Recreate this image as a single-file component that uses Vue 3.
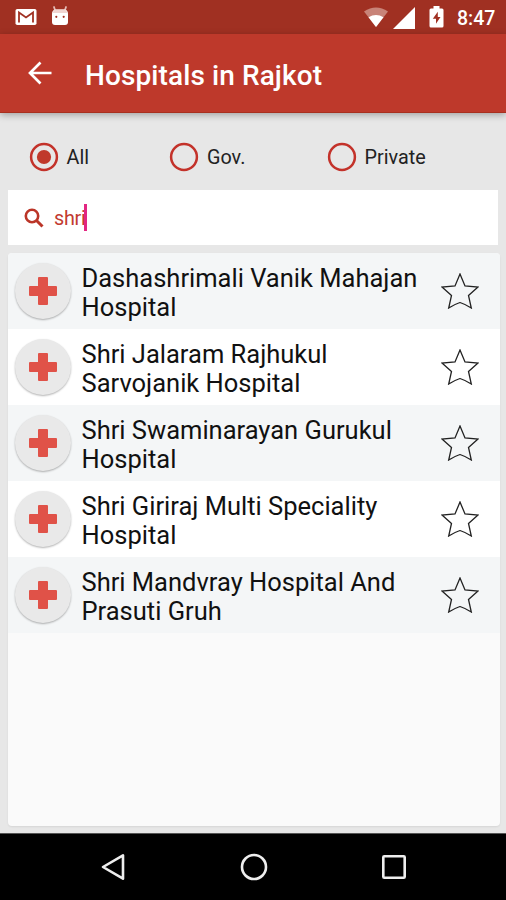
<script setup>
import { ref } from 'vue'

const filters = ['All', 'Gov.', 'Private']
const selected = ref('All')
const query = ref('shri')

const hospitals = [
  ['Dashashrimali Vanik Mahajan', 'Hospital'],
  ['Shri Jalaram Rajhukul', 'Sarvojanik Hospital'],
  ['Shri Swaminarayan Gurukul', 'Hospital'],
  ['Shri Giriraj Multi Speciality', 'Hospital'],
  ['Shri Mandvray Hospital And', 'Prasuti Gruh'],
]
</script>

<template>
  <div class="screen">
    <div class="status">
      <svg class="mail" width="22" height="18" viewBox="0 0 22 18">
        <rect x="0.5" y="1" width="21" height="16" rx="1.8" fill="#fff" />
        <path d="M4 14.500V4.600L11 9.500l7-4.900V14.500" fill="none" stroke="#a03022" stroke-width="1.800" />
      </svg>
      <svg class="droid" width="18" height="20" viewBox="0 0 18 20">
        <path d="M4 4L3 1M14 4l1-3" stroke="#e3b9b3" stroke-width="1.800" stroke-linecap="round" />
        <path d="M1 8Q1 3.500 5 3.500h8q4 0 4 4.500v8q0 3-3 3H4q-3 0-3-3z" fill="#fff" />
        <path d="M2 7q0-3.500 3.500-3.500h7q3.500 0 3.500 3.500z" fill="#f0d4d0" />
        <circle cx="5.300" cy="10.800" r="1.100" fill="#a03022" />
        <circle cx="12.700" cy="10.800" r="1.100" fill="#a03022" />
      </svg>
      <span class="fill"></span>
      <svg class="wifi" width="26" height="21" viewBox="0 0 26 21">
        <path d="M1 4.500Q13-3.500 25 4.500L13 20z" fill="#c88378" />
        <path d="M5.500 10.300Q13 5.500 20.500 10.300L13 20z" fill="#fff" />
      </svg>
      <svg class="signal" width="22" height="22" viewBox="0 0 22 22">
        <path d="M0 22L22 0v22z" fill="#fff" />
      </svg>
      <svg class="battery" width="15" height="22" viewBox="0 0 15 22">
        <path d="M4.500 0h6v2.500H13q1.500 0 1.500 1.500v16q0 1.500-1.500 1.500H2Q.5 21.500.5 20V4Q.5 2.500 2 2.500h2.500z" fill="#fff" />
        <path d="M8.800 5.800L3.800 12.800h3.200v5L11.500 11H8.800z" fill="#a03022" />
      </svg>
      <span class="time">8:47</span>
    </div>

    <header class="appbar">
      <svg width="24" height="24" viewBox="0 0 24 24">
        <path d="M12.500 1.500L2 12l10.500 10.500M2 12h21.500" fill="none" stroke="#fff" stroke-width="2.700" />
      </svg>
      <h1>Hospitals in Rajkot</h1>
    </header>

    <main class="body">
      <div class="filters">
        <button v-for="f in filters" :key="f" class="filter" @click="selected = f">
          <svg width="30" height="30" viewBox="0 0 30 30">
            <circle cx="15" cy="15" r="12.900" fill="none" stroke="#c3322a" stroke-width="2.500" />
            <circle v-if="selected === f" cx="15" cy="15" r="7.100" fill="#c0392b" />
          </svg>
          <span>{{ f }}</span>
        </button>
      </div>

      <div class="search">
        <svg width="20" height="20" viewBox="0 0 20 20">
          <circle cx="8" cy="8" r="6.200" fill="none" stroke="#bb3528" stroke-width="2.600" />
          <path d="M12.500 12.500l6 6" stroke="#bb3528" stroke-width="3" />
        </svg>
        <span class="query">{{ query }}</span>
        <span class="caret"></span>
      </div>

      <div class="list">
        <div v-for="h in hospitals" :key="h[0]" class="row">
          <span class="badge">
            <svg width="28" height="28" viewBox="0 0 28 28">
              <path d="M10 0h8q1 0 1 1v8h8q1 0 1 1v8q0 1-1 1h-8v8q0 1-1 1h-8q-1 0-1-1v-8H1q-1 0-1-1v-8q0-1 1-1h8V1q0-1 1-1z" fill="#e05248" />
            </svg>
          </span>
          <p class="name"><span>{{ h[0] }}</span><br><span>{{ h[1] }}</span></p>
          <svg class="star" width="38" height="36" viewBox="0 0 38 36">
            <path d="M19 1L24 13L37 14L27.500 22.500L30.300 35Q25 31.500 19 29.500Q13 31.500 7.700 35L10.500 22.500L1 14L14 13Z" fill="none" stroke="#222" stroke-width="1.300" />
          </svg>
        </div>
      </div>
    </main>

    <nav class="nav">
      <svg width="26" height="30" viewBox="0 0 26 30">
        <path d="M23 3.300v23.400L3 15z" fill="none" stroke="#eee" stroke-width="2.600" stroke-linejoin="round" />
      </svg>
      <svg width="30" height="30" viewBox="0 0 30 30">
        <circle cx="15" cy="15" r="12" fill="none" stroke="#eee" stroke-width="2.600" />
      </svg>
      <svg width="26" height="26" viewBox="0 0 26 26">
        <rect x="2.300" y="2.300" width="21.400" height="21.400" rx="1" fill="none" stroke="#eee" stroke-width="2.600" />
      </svg>
    </nav>
  </div>
</template>

<style>
body {
  margin: 0;
}
</style>

<style scoped>
.screen {
  width: 506px;
  height: 900px;
  display: flex;
  flex-direction: column;
  overflow: hidden;
  background: #e7e7e7;
  font-family: Roboto, "Liberation Sans", sans-serif;
}
svg {
  display: block;
  flex: none;
}
.status {
  height: 34px;
  flex: none;
  box-sizing: border-box;
  padding: 0 11px 0 15px;
  display: flex;
  align-items: center;
  background: #a03022;
  color: #fff;
}
.droid {
  margin: -2px 0 0 14px;
}
.fill {
  flex: 1;
}
.wifi {
  margin-top: 1px;
}
.signal {
  margin: 2px 0 0 4px;
}
.battery {
  margin-left: 14px;
}
.time {
  width: 38px;
  margin: 3px 0 0 13px;
  font-size: 19.500px;
  font-weight: 500;
  white-space: nowrap;
}
.appbar {
  height: 79px;
  flex: none;
  box-sizing: border-box;
  padding: 0 0 0 28px;
  display: flex;
  align-items: center;
  gap: 33px;
  background: #be392b;
  border-bottom: 1px solid #a8301f;
  box-shadow: 0 2px 7px rgba(0, 0, 0, 0.3);
  color: #fff;
}
h1 {
  margin: 4px 0 0;
  font-size: 28px;
  font-weight: 500;
  letter-spacing: 0.100px;
  white-space: nowrap;
}
.body {
  flex: 1;
  min-height: 0;
  box-sizing: border-box;
  padding: 0 6px 7px 8px;
  display: flex;
  flex-direction: column;
}
.filters {
  height: 77px;
  flex: none;
  box-sizing: border-box;
  padding: 10px 0 0 20.500px;
  display: grid;
  grid-template-columns: 140.500px 157.500px 1fr;
  align-items: center;
}
.filter {
  padding: 0;
  border: 0;
  background: none;
  display: flex;
  align-items: center;
  gap: 8px;
  font: 400 19.800px Roboto, sans-serif;
  color: #222;
}
.filter span {
  margin-top: 1px;
}
.search {
  height: 55px;
  flex: none;
  box-sizing: border-box;
  margin-right: 2px;
  padding-left: 16px;
  display: flex;
  align-items: center;
  background: #fff;
}
.query {
  margin: 2px 0 0 10px;
  font-size: 19.800px;
  letter-spacing: -0.300px;
  color: #c23b31;
}
.caret {
  width: 3px;
  height: 27px;
  margin: -1px 0 0 -1px;
  background: #e32682;
}
.list {
  flex: 1;
  min-height: 0;
  margin-top: 8.400px;
  border-radius: 4px;
  overflow: hidden;
  background: #fafafa;
  box-shadow: 0 1px 2px rgba(0, 0, 0, 0.08);
}
.row {
  height: 76px;
  box-sizing: border-box;
  padding: 0 21px 0 6.500px;
  display: flex;
  align-items: center;
  background: #fff;
}
.row:nth-child(odd) {
  background: #f4f6f7;
}
.badge {
  width: 56px;
  height: 56px;
  flex: none;
  border-radius: 50%;
  display: flex;
  align-items: center;
  justify-content: center;
  background: #e9e9e9;
  box-shadow: 0 1px 2px rgba(0, 0, 0, 0.3);
}
.name {
  flex: 1;
  margin: 3px 0 0 11px;
  font-size: 25.500px;
  line-height: 29.300px;
  white-space: nowrap;
  color: #111;
}
.nav {
  height: 67px;
  flex: none;
  box-sizing: border-box;
  border-top: 1px solid #555;
  padding: 0 99px 0 100px;
  display: flex;
  align-items: center;
  justify-content: space-between;
  background: #000;
}
</style>
